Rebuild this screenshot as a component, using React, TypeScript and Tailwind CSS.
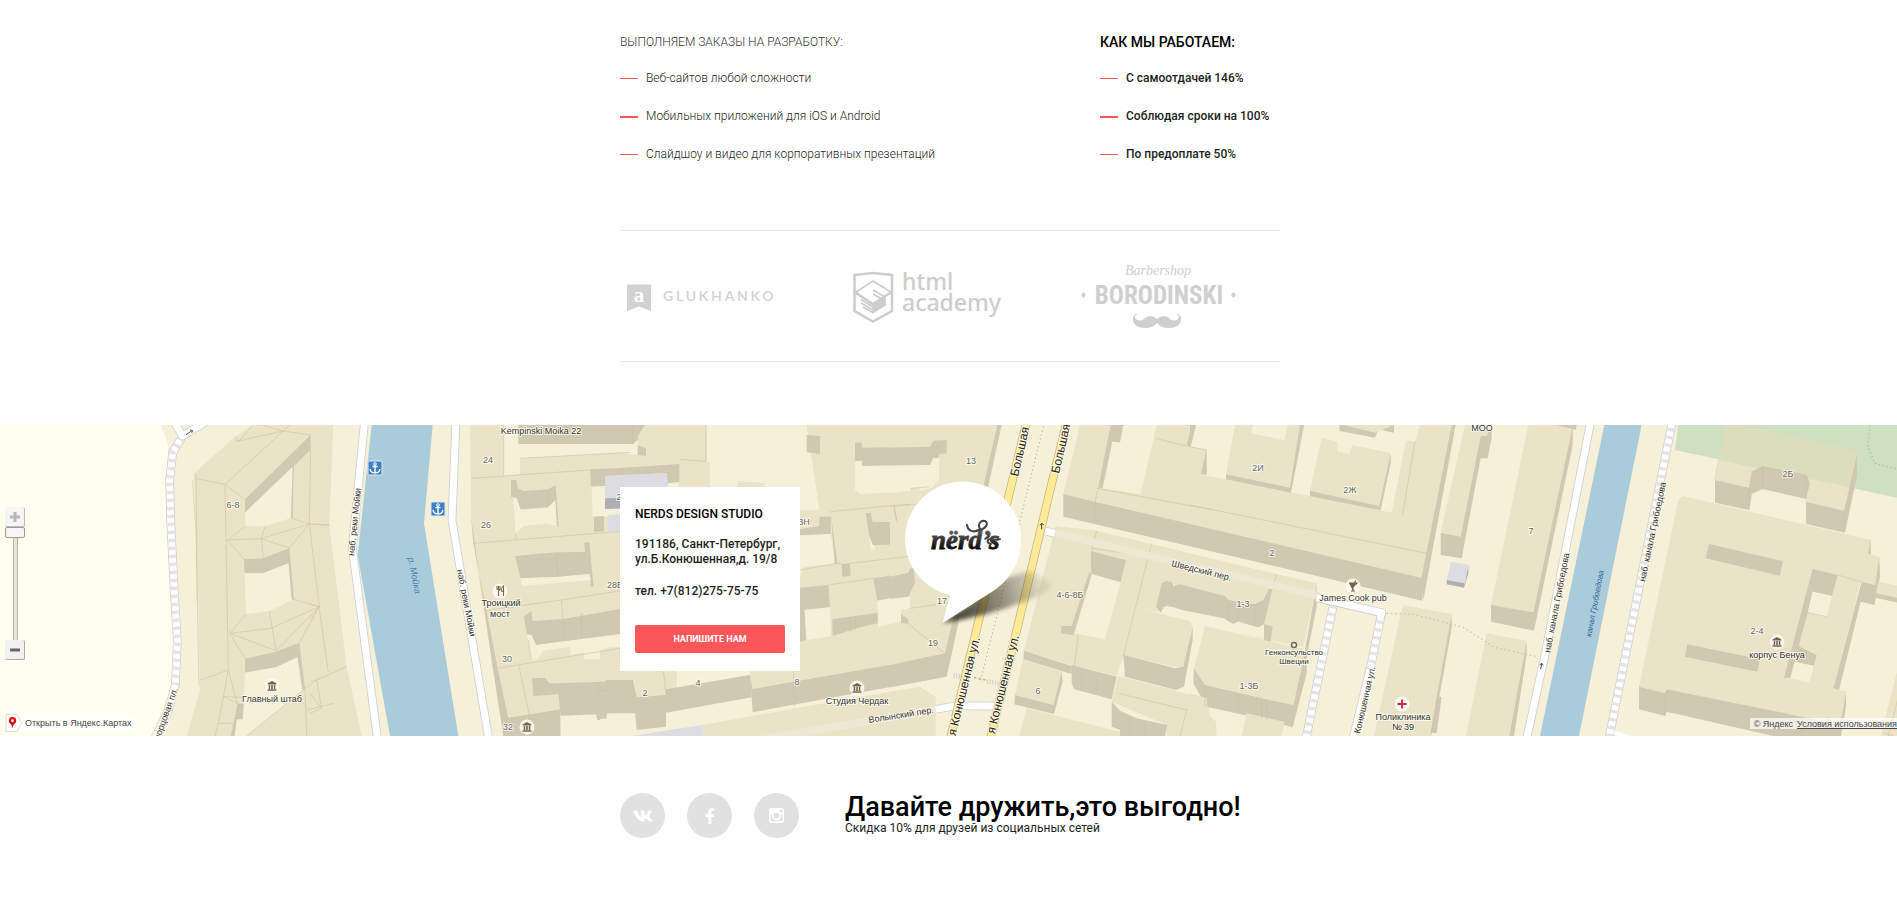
import React from "react";
import { FaFacebookF, FaVk } from "react-icons/fa";

const FILL: Record<string, string> = {
  square: "#fffff0",
  land: "#f7f0d9",
  roof: "#eae3c7",
  wall: "#d0c8b0",
  water: "#aacbda",
  green: "#cfe0c0",
  tint: "#dcddbc",
  lilac: "#dddce2",
  lilacWall: "#b0aeb5",
};

type Shape = [string, string];

/* Each tile holds shapes in units of a third of a pixel. */
const tileA: Shape[] = [
  ["square", "0,15 482,15 505,75 498,180 502,320 512,520 520,680 515,800 455,948 0,948"],
  ["roof", "755,15 1000,15 988,315 1040,740 1085,948 560,948 600,810 595,545 582,160 700,55"],
  ["wall", "932,45 735,238 735,278 932,90"],
  ["land", "735,278 878,140 873,294 795,319 737,318"],
  ["wall", "878,140 882,136 878,294 873,294"],
  ["wall", "732,418 790,415 868,384 882,538 875,541 865,430 790,460 734,460"],
  ["land", "734,460 790,460 865,430 875,540 808,573 738,583"],
  ["wall", "735,716 828,695 898,668 915,805 907,812 892,712 828,742 735,758"],
  ["land", "735,758 828,742 892,712 907,812 740,948 703,948 712,898 728,898"],
  ["wall", "712,853 731,850 728,898 710,898 703,948 693,948"],
];

const tileB: Shape[] = [
  ["water", "185,15 368,15 342,310 445,948 240,948 143,405"],
  ["roof", "480,15 1100,15 1100,948 585,948 548,740 490,370 483,290"],
  ["wall", "483,290 490,370 562,740 595,895 600,948 580,948 548,740"],
  ["land", "582,15 960,15 960,97 630,115 630,162 581,167"],
  ["wall", "625,15 960,15 960,72 625,72"],
  ["wall", "603,180 620,180 623,205 640,213 715,208 737,195 746,318 740,320 736,245 712,262 632,268 620,235 603,230"],
  ["land", "610,234 620,235 632,270 712,264 736,240 740,318 712,311 640,317 617,340"],
  ["wall", "840,148 960,143 960,165 885,168 885,198 843,200"],
  ["land", "845,200 885,198 885,267 960,262 960,290 848,290"],
  ["lilac", "885,168 1070,160 1073,235 885,235"],
  ["lilacWall", "885,235 1073,232 1073,262 885,267"],
  ["wall", "852,290 882,288 882,334 852,336"],
  ["lilac", "895,285 940,282 940,332 895,334"],
  ["wall", "615,408 740,397 825,396 823,368 838,367 851,500 843,500 838,462 750,470 632,475"],
  ["land", "632,475 750,470 838,462 843,480 635,498"],
  ["wall", "641,590 664,573 668,603 760,597 960,562 960,640 678,675 664,645 651,643"],
  ["land", "651,643 664,645 678,675 960,638 960,680 895,683 895,718 822,718 822,697 782,705 780,680 700,692 684,718 664,720"],
  ["wall", "592,895 750,870 752,948 580,948"],
  ["land", "752,887 1000,878 1000,948 752,948"],
  ["wall", "666,775 705,773 718,790 738,790 860,786 960,780 960,878 890,880 888,900 862,900 858,883 752,887 745,822 715,825 670,828"],
];

const tileC: Shape[] = [
  ["roof", "60,15 330,15 330,400 60,400"],
  ["wall", "60,15 135,15 115,45 113,60 100,72 60,72"],
  ["land", "60,72 100,72 113,60 115,105 60,98"],
  ["wall", "113,75 138,85 138,108 113,105"],
  ["wall", "60,144 238,132 238,200 203,200 200,160 60,166"],
  ["lilac", "60,165 200,160 203,210 60,210"],
  ["land", "203,190 238,186 238,205 203,205"],
  ["land", "320,15 620,15 620,95 658,100 658,270 500,270 358,210 355,128 320,125"],
  ["roof", "412,183 495,190 495,230 412,230"],
  ["roof", "620,15 1000,15 1000,760 600,780 600,270 658,270"],
  ["wall", "620,45 660,48 660,102 620,97"],
  ["wall", "765,68 785,68 785,83 990,80 990,135 785,138 785,122 765,124"],
  ["land", "765,124 785,122 785,138 990,135 990,203 930,205 930,214 780,222 765,210"],
  ["wall", "600,328 658,318 658,290 692,290 692,342 600,345"],
  ["land", "600,347 692,342 706,432 612,440 600,470"],
  ["wall", "692,275 712,430 704,432"],
  ["wall", "797,278 812,280 818,307 990,303 990,368 820,376 808,350"],
  ["land", "808,350 818,376 825,378 825,390 812,392"],
  ["wall", "725,432 750,430 752,468 727,470"],
  ["wall", "600,503 685,495 690,562 614,570 618,660 600,665"],
  ["land", "614,570 690,562 693,648 620,660"],
  ["wall", "697,598 833,578 833,610 780,622 698,648"],
  ["wall", "820,475 925,458 930,448 942,445 942,515 928,530 920,525 832,542"],
  ["land", "832,542 920,525 935,530 935,570 905,570 905,605 835,620"],
  ["wall", "903,580 925,600 925,612 903,608"],
  ["land", "0,895 20,895 20,880 110,880 460,850 1010,760 1070,948 0,948"],
  ["roof", "0,690 25,683 60,680 60,750 190,750 198,810 450,765 450,750 600,750 960,650 960,718 458,807 198,825 110,832 98,780 0,780"],
  ["wall", "0,800 20,797 18,780 98,780 110,832 110,880 20,880 20,895 0,897"],
  ["wall", "110,832 198,825 198,920 110,930 98,800"],
  ["wall", "198,808 450,765 455,832 198,878"],
  ["wall", "458,807 1010,710 1038,700 1038,770 458,877 450,765"],
  ["lilac", "95,948 305,915 310,948"],
  ["roof", "305,915 870,815 960,800 1007,830 1007,948 310,948"],
];

const tileD: Shape[] = [
  ["roof", "0,15 322,15 165,700 0,738"],
  ["wall", "322,15 335,15 170,770 163,770 165,700"],
  ["wall", "0,83 120,80 130,62 170,60 170,100 148,102 145,115 130,115 120,135 0,137"],
  ["land", "0,137 120,135 130,115 148,115 148,180 125,203 92,212 88,203 60,203 60,212 0,220"],
  ["wall", "0,470 55,458 60,445 72,445 75,490 55,530 0,535"],
  ["land", "0,540 60,530 60,565 35,570 33,605 0,612"],
  ["wall", "33,582 55,598 55,612 33,608"],
  ["wall", "0,735 165,700 168,770 0,802"],
  ["roof", "570,15 1685,15 1600,475 520,222"],
  ["wall", "520,222 615,245 1600,475 1597,542 520,290"],
  ["wall", "662,15 705,15 690,68 667,65 640,205 625,203"],
  ["land", "700,15 800,15 752,222 638,205 667,65 690,68"],
  ["wall", "905,15 918,15 905,80 890,75"],
  ["wall", "948,90 950,168 934,165"],
  ["roof", "497,318 620,332 1160,462 1280,490 1240,680 1130,660 740,560 700,708 680,768 545,735 402,692"],
  ["wall", "402,692 545,738 545,762 400,718"],
  ["wall", "545,735 680,770 665,838 553,808 545,790"],
  ["wall", "603,393 695,418 708,420 692,487 603,462"],
  ["land", "603,462 692,487 645,658 555,640"],
  ["wall", "605,465 550,645 512,640 515,618 545,618 598,455"],
  ["wall", "798,560 815,490 830,483 846,487 850,500 868,493 1005,528 1015,540 1095,553 1120,540 1137,507 1147,508 1122,612 1105,622 1070,615 1045,603 1030,612 1010,605 1005,595 875,570 850,562 830,555 815,580"],
  ["land", "812,580 822,560 850,562 875,570 1005,597 1030,612 1045,605 1105,622 1122,614 1122,655 945,618 910,745 908,620 898,603"],
  ["roof", "740,560 815,583 900,603 909,620 880,745 700,708"],
  ["wall", "700,705 855,745 880,740 908,620 908,660 882,800 858,810 705,770"],
  ["roof", "398,718 515,755 490,855 375,825"],
  ["wall", "375,825 490,855 515,755 518,785 492,882 373,853"],
  ["roof", "410,865 690,935 690,948 388,948"],
  ["roof", "685,768 955,838 958,885 978,905 980,948 830,948 830,915 665,845"],
  ["wall", "665,845 690,872 740,895 832,915 825,948 690,948 690,930 665,920"],
];

const tileE: Shape[] = [
  ["wall", "0,15 18,15 5,75 0,80"],
  ["land", "18,15 135,15 108,163 108,178 32,165 45,130 50,88 2,80"],
  ["wall", "50,88 50,165 33,163"],
  ["land", "342,15 690,15 675,65 648,62 605,278 360,228 303,217 330,80"],
  ["land", "190,15 292,15 283,60 183,40"],
  ["wall", "108,163 300,203 330,15 342,15 303,218 108,178"],
  ["roof", "395,53 442,65 442,92 478,102 487,75 602,100 567,258 360,212"],
  ["wall", "360,212 567,258 602,100 602,130 572,271 360,229"],
  ["wall", "448,15 612,15 612,38 565,28 555,53 448,33"],
  ["roof", "460,15 612,15 555,38"],
  ["wall", "785,15 797,15 700,540 694,475"],
  ["roof", "825,15 905,15 890,48 872,48 812,350 752,338"],
  ["wall", "752,338 812,350 872,48 890,48 905,15 905,55 893,115 872,115 815,415 752,405"],
  ["lilac", "783,425 835,435 825,490 770,480"],
  ["lilacWall", "770,480 825,490 835,435 835,460 822,503 770,493"],
  ["roof", "1015,15 1150,15 1148,50 1030,577 903,555"],
  ["wall", "903,555 1030,577 1148,20 1148,75 1032,632 903,605"],
  ["wall", "1100,15 1160,15 1158,30"],
  ["roof", "638,555 785,582 722,948 552,948"],
  ["wall", "785,582 785,625 748,830 755,830 740,940 722,938 740,830"],
  ["roof", "890,640 1010,663 960,948 828,948"],
  ["wall", "1010,663 1010,705 972,948 958,948"],
  ["roof", "45,618 350,690 310,855 45,795 12,745"],
  ["wall", "12,745 45,795 230,838 310,855 345,700 350,700 350,760 308,922 230,900 50,860 10,790"],
  ["wall", "222,612 248,620 242,665 222,660"],
  ["wall", "380,490 380,560 350,710 343,702"],
  ["roof", "0,820 50,835 55,885 75,905 80,948 0,948"],
  ["roof", "170,880 283,905 275,948 155,948"],
];

const tileF: Shape[] = [
  ["water", "193,15 305,15 117,948 0,948"],
  ["green", "415,15 1071,15 1071,233 405,90"],
  ["roof", "560,15 600,15 953,95 945,205 912,272 798,245 630,270 627,203 525,180"],
  ["tint", "560,15 600,15 953,95 945,205 535,120"],
  ["land", "635,222 668,207 798,235 798,312 630,270"],
  ["wall", "525,180 627,203 635,155 668,138 800,165 810,190 798,237 668,207 635,222 627,270 525,248"],
  ["wall", "798,245 912,272 953,95 950,170 915,338 798,312"],
  ["roof", "428,228 992,360 992,402 1018,410 1005,495 962,485 880,805 918,815 900,915 378,808 375,820 297,800 415,240"],
  ["wall", "297,800 375,820 380,808 785,890 900,915 918,815 918,860 903,948 700,948 380,875 375,888 297,868"],
  ["wall", "992,360 992,402 984,400"],
  ["wall", "507,372 728,423 720,467 497,415"],
  ["wall", "442,673 660,718 652,755 435,710"],
  ["wall", "818,447 893,465 876,528 818,515 803,578 750,775 732,773"],
  ["wall", "768,675 830,705 822,738 765,725"],
  ["land", "818,515 876,528 860,590 803,578"],
  ["land", "765,725 822,738 808,788 752,775"],
  ["wall", "965,485 1005,495 1018,410 1020,470 1003,555 962,545 897,810 880,805"],
  ["roof", "1015,485 1080,498 1080,535 1008,520"],
  ["wall", "1008,520 1080,535 1080,550 1008,533"],
  ["roof", "1071,755 1085,755 1085,948 1022,948"],
];

const SEAMS: [number, string][] = [
  [0, "M585,175L675,193L850,33L932,45M675,193L735,238M675,193L685,750L712,853M850,33L790,15M850,33L870,15M850,33L705,65M737,318L683,360L732,418M683,360L784,356L790,415M784,356L795,319M784,356L928,312L873,294M784,356L868,384L928,312L932,90M928,312L958,560L882,538M958,560L828,692L808,573M958,560L812,625L690,640L738,583M690,640L735,716M690,640L828,692M958,560L898,668M600,780L685,750M685,750L670,830L731,832M670,830L655,910L700,910M655,910L645,948M728,858L670,830M915,805L958,775M915,805L920,948M920,870L1000,850M928,312L988,315M740,948L907,812M705,50L715,65L755,20M578,180L588,340L597,800M592,545L588,160"],
  [310, "M0,553L27,560L55,757M0,600L27,560M0,785L20,780L110,740M20,780L35,865L0,880M0,820L35,865M0,312L58,315M483,175L840,150M581,15L581,165M490,370L960,332M525,572L755,540L960,508M755,540L762,660M617,340L617,358M562,745L960,680M625,730L658,885M664,720L655,660M592,895L750,870M740,397L743,470M815,580L815,655M712,208L712,262M862,786L862,812L890,812L890,785M630,115L960,97"],
  [600, "M238,118L320,125M692,275L890,255L960,252M882,255L890,300M712,430L725,432M750,430L960,405M600,450L712,430M685,495L820,475M750,590L752,635M765,590L767,630M580,750L583,860M190,750L198,825M318,15L318,125M98,780L98,800M97,15L97,72M932,205L990,200"],
  [890, "M0,260L60,255M12,260L20,305M60,565L180,548M55,612L165,700M625,203L615,245L615,310M795,55L890,78L950,90M620,332L605,390M785,370L700,708M605,385L710,400M620,205L960,268M553,740L565,645M620,765L618,820M575,755L575,812M685,820L890,870L870,948M720,895L720,948M765,905L765,948"],
  [1190, "M0,255L710,400M675,65L638,283M260,462L247,508M230,838L230,900M115,540L115,605M195,553L195,620M145,545L145,600M145,825L145,880M45,795L45,860M215,838L215,895M722,948L735,880"],
  [1540, "M627,203L627,270M912,272L912,335M668,138L668,207M798,168L798,235M893,465L962,485M785,890L785,948M375,820L375,888M535,120L525,180M803,578L860,590M1045,948L1085,790M1032,940L1085,955M865,890L862,915"],
];

function Tile({ x, shapes }: { x: number; shapes: Shape[] }) {
  return (
    <g transform={`translate(${x} -5) scale(0.33333)`}>
      {shapes.map(([kind, points], i) => (
        <polygon key={i} points={points} fill={FILL[kind]} />
      ))}
    </g>
  );
}

function Road({ d, width = 21, color = "#fff", edge = "#cfcfcf", striped = false }: { d: string; width?: number; color?: string; edge?: string; striped?: boolean }) {
  return (
    <g fill="none" strokeLinejoin="round">
      <path d={d} stroke={edge} strokeWidth={width + 5} />
      <path d={d} stroke={color} strokeWidth={width} />
      {striped && <path d={d} stroke="#e4e4e4" strokeWidth={width} strokeDasharray="10 14" />}
    </g>
  );
}

function Label({ x, y, r = 0, size = 9, color = "#666", anchor = "middle", italic = false, children }: { x: number; y: number; r?: number; size?: number; color?: string; anchor?: "start" | "middle" | "end"; italic?: boolean; children: string }) {
  return (
    <text
      x={x}
      y={y}
      fontSize={size}
      fill={color}
      textAnchor={anchor}
      fontStyle={italic ? "italic" : "normal"}
      transform={r ? `rotate(${r} ${x} ${y})` : undefined}
      stroke={italic ? "none" : "#fffdf2"}
      strokeOpacity="0.8"
      strokeWidth="2"
      paintOrder="stroke"
    >
      {children}
    </text>
  );
}

function Museum({ x, y }: { x: number; y: number }) {
  return (
    <g transform={`translate(${x} ${y})`}>
      <circle r="7.5" fill="#fffdf5" fillOpacity="0.85" />
      <path d="M-4.5-2.5 0-5l4.5 2.5v1h-9zM-3.3-1h1.5v4h-1.5zM-.8-1H.8v4H-.8zM1.8-1h1.5v4H1.8zM-4.5 3.3h9v1.4h-9z" fill="#7b6350" />
    </g>
  );
}

function Anchor({ x, y }: { x: number; y: number }) {
  return (
    <g transform={`translate(${x} ${y})`}>
      <rect x="-7" y="-7" width="14" height="14" rx="1" fill="#3f7fc4" stroke="#dfeaf5" />
      <path d="M0-3v8M-2.5-1.5h5M-5 1C-4.5 4-2.500 5 0 5s4.500-1 5-4" fill="none" stroke="#fff" strokeWidth="1.4" />
      <circle cy="-4" r="1.300" fill="none" stroke="#fff" />
    </g>
  );
}

function MapDrawing() {
  return (
    <svg viewBox="0 0 1897 311" preserveAspectRatio="xMidYMid slice" className="block h-[311px] w-full" style={{ fontFamily: '"Liberation Sans", Arial, sans-serif' }} role="img" aria-label="Карта">
      <defs>
        <linearGradient id="shade" gradientUnits="userSpaceOnUse" x1="945" y1="195" x2="1055" y2="160">
          <stop offset="0" stopColor="#2a2618" stopOpacity="0.95" />
          <stop offset="0.35" stopColor="#2a2618" stopOpacity="0.65" />
          <stop offset="1" stopColor="#2a2618" stopOpacity="0" />
        </linearGradient>
        <linearGradient id="ink" x1="0" y1="0" x2="0" y2="1">
          <stop offset="0" stopColor="#777" />
          <stop offset="0.8" stopColor="#0a0a0a" />
        </linearGradient>
        <filter id="soft" x="-20%" y="-20%" width="140%" height="140%">
          <feGaussianBlur stdDeviation="2" />
        </filter>
      </defs>
      <rect width="1897" height="311" fill={FILL.land} />
      <Tile x={0} shapes={tileA} />
      <Tile x={310} shapes={tileB} />
      <Tile x={600} shapes={tileC} />
      <Tile x={890} shapes={tileD} />
      <Tile x={1190} shapes={tileE} />
      <Tile x={1540} shapes={tileF} />
      {SEAMS.map(([x, d]) => (
        <g key={x} transform={`translate(${x} -5) scale(0.33333)`}>
          <path d={d} fill="none" stroke="#cdbf9a" strokeOpacity="0.55" strokeWidth="3" />
        </g>
      ))}

      <g transform="translate(0 -5) scale(0.33333)">
        <Road d="M545,52L518,98L509,180L512,300L522,500L532,660L526,800" striped />
        <Road d="M526,795L502,880L462,960" />
        <Road d="M520,0L547,48L640,-8" />
        <path d="M558,44L576,32M570,30l8,2l-3,7" stroke="#555" strokeWidth="3" fill="none" />
      </g>
      <g transform="translate(310 -5) scale(0.33333)">
        <Road d="M164,0L127,385L203,960" />
        <Road d="M438,0L426,300L537,960" />
      </g>
      <g transform="translate(600 -5) scale(0.33333)">
        <path d="M480,960L1008,868" stroke="#efe6d4" strokeWidth="24" fill="none" />
      </g>
      <g transform="translate(890 -5) scale(0.33333)">
        <path d="M490,337L850,425L1285,527" stroke="#efe6d4" strokeWidth="22" fill="none" />
        <Road d="M137,868L200,857L315,858" />
        <Road d="M460,331L494,340" />
        <Road d="M412,0L370,170L180,960" color="#ffe995" edge="#c4b98b" />
        <Road d="M532,0L490,170L378,640L300,960" color="#ffe995" edge="#c4b98b" />
        <path d="M460,20L388,310L345,490L272,780" stroke="#a5c98f" strokeWidth="3.500" strokeDasharray="4 8" fill="none" />
        <path d="M455,328v-18l-5,6m5,-6l6,4" stroke="#444" strokeWidth="3" fill="none" />
        <path d="M192,760v14M200,761v14M208,763v14M216,765v14M292,778v14M300,779v14M308,780v14M316,782v14M324,784v14" stroke="#bbb" strokeWidth="2" />
        <path d="M252,772L288,780" stroke="#a5c98f" strokeWidth="5" strokeDasharray="7 7" />
      </g>
      <g transform="translate(1190 -5) scale(0.33333)">
        <Road d="M430,555L347,960" striped />
        <Road d="M575,578L540,750" striped />
        <Road d="M540,748L488,960" />
        <Road d="M380,533L575,578L570,595" />
        <Road d="M1203,0L1066,700L1009,960" />
        <path d="M590,580L670,583L820,622L915,683L1042,710" stroke="#b9c79a" strokeWidth="3.500" strokeDasharray="4 9" fill="none" />
        <path d="M1052,748l3,-18l-6,5m6,-5l5,6" stroke="#444" strokeWidth="3" fill="none" />
      </g>
      <g transform="translate(1540 -5) scale(0.33333)">
        <Road d="M398,0L206,960" striped />
        <path d="M990,15L983,80L1005,130L1071,148" stroke="#a5c98f" strokeWidth="4" strokeDasharray="4 8" fill="none" />
        <path d="M222,937L270,952" stroke="#fff" strokeWidth="12" />
      </g>

      <Museum x={272} y={261} />
      <Museum x={527} y={302} />
      <Museum x={857} y={263} />
      <Museum x={1777} y={217} />
      <Anchor x={375} y={43} />
      <Anchor x={438} y={84} />
      <g transform="translate(500 166)">
        <circle r="7.500" fill="#fffdf5" fillOpacity="0.850" />
        <path d="M-3-5v3.500M-1.500-5v3.500M0-5v3.500M-3-1.500H0L-1.500 0v5M3.500 5V-5C1.500-4 1.500-1 2 0.500h1.500" fill="none" stroke="#7b6350" strokeWidth="1.100" />
      </g>
      <g transform="translate(1353 161)">
        <circle r="7.500" fill="#fffdf5" fillOpacity="0.850" />
        <path d="M-4-3H4L0 1v4M-2 5h4M1-3l2-2.500" fill="#7b6350" stroke="#7b6350" strokeWidth="1.200" />
      </g>
      <g transform="translate(1402 279)">
        <circle r="7.500" fill="#fffdf5" fillOpacity="0.900" />
        <path d="M0-4.500v9M-4.500 0h9" stroke="#c62640" strokeWidth="1.800" />
      </g>
      <circle cx="1294" cy="220" r="2.500" fill="#fff" stroke="#7b6350" strokeWidth="1.500" />

      <Label x={233} y={83}>6-8</Label>
      <Label x={272} y={277} color="#333">Главный штаб</Label>
      <Label x={178} y={264} r={-70} anchor="end" color="#333">ворцовая пл.</Label>
      <Label x={541} y={9} color="#333">Kempinski Moika 22</Label>
      <Label x={488} y={38}>24</Label>
      <Label x={486} y={103}>26</Label>
      <Label x={615} y={163}>28Б</Label>
      <Label x={507} y={237}>30</Label>
      <Label x={508} y={305}>32</Label>
      <Label x={619} y={75}>2</Label>
      <Label x={501} y={181} color="#333">Троицкий</Label>
      <Label x={500} y={192} color="#333">мост</Label>
      <Label x={354} y={131} r={-84} anchor="start" color="#333">наб. реки Мойки</Label>
      <Label x={457} y={145} r={79} anchor="start" color="#333">наб. реки Мойки</Label>
      <Label x={408} y={133} r={79} anchor="start" color="#4b7fae" italic>р. Мойка</Label>
      <Label x={645} y={271}>2</Label>
      <Label x={698} y={261}>4</Label>
      <Label x={797} y={260}>8</Label>
      <Label x={804} y={100}>3Н</Label>
      <Label x={857} y={279} color="#333">Студия Чердак</Label>
      <Label x={869} y={298} r={-9} anchor="start" color="#333">Волынский пер.</Label>
      <Label x={971} y={39}>13</Label>
      <Label x={942} y={179}>17</Label>
      <Label x={933} y={221}>19</Label>
      <Label x={1038} y={269}>6</Label>
      <Label x={1070} y={173}>4-6-8Б</Label>
      <Label x={1018} y={52} r={-77} size={12} anchor="start" color="#222">Большая</Label>
      <Label x={1059} y={49} r={-77} size={12} anchor="start" color="#222">Большая</Label>
      <Label x={980} y={213} r={-76} size={12} anchor="end" color="#222">я Конюшенная ул.</Label>
      <Label x={1019} y={211} r={-76} size={12} anchor="end" color="#222">я Конюшенная ул.</Label>
      <Label x={1171} y={141} r={14} anchor="start" color="#333">Шведский пер.</Label>
      <Label x={1258} y={46}>2И</Label>
      <Label x={1350} y={68}>2Ж</Label>
      <Label x={1272} y={131}>2</Label>
      <Label x={1243} y={182}>1-3</Label>
      <Label x={1249} y={264}>1-3Б</Label>
      <Label x={1353} y={176} color="#333">James Cook pub</Label>
      <Label x={1294} y={230} size={8} color="#333">Генконсульство</Label>
      <Label x={1294} y={239} size={8} color="#333">Швеции</Label>
      <Label x={1403} y={295} color="#333">Поликлиника</Label>
      <Label x={1403} y={305} color="#333">№ 39</Label>
      <Label x={1360} y={309} r={-77} anchor="start" color="#333">Конюшенная ул.</Label>
      <Label x={1482} y={6} color="#333">МОО</Label>
      <Label x={1531} y={109}>7</Label>
      <Label x={1550} y={228} r={-79} anchor="start" color="#333">наб. канала Грибоедова</Label>
      <Label x={1645} y={157} r={-78} anchor="start" color="#333">наб. канала Грибоедова</Label>
      <Label x={1591} y={212} r={-79} size={8} anchor="start" color="#2f659c" italic>канал Грибоедова</Label>
      <Label x={1788} y={52}>2Б</Label>
      <Label x={1757} y={209}>2-4</Label>
      <Label x={1777} y={233} color="#333">корпус Бенуа</Label>

      <path d="M943 198 1006 153 1030 146Q1045 156 1058 160 1010 188 943 198Z" fill="url(#shade)" filter="url(#soft)" />
      <path d="M950 170 942.500 198 990 168C1010 156 1021 137 1021 114A58 57.500 0 1 0 950 170Z" fill="#fff" />
      <text x="931" y="124" fontSize="27" fontWeight="700" fontStyle="italic" fill="url(#ink)" stroke="url(#ink)" strokeWidth="0.8" style={{ fontFamily: '"Liberation Serif", serif' }}>
        nërd’s
      </text>
      <path d="M967 100c1 7 8 8 13 4-3-5 1-9 5-8 4 2 1 8-6 9M991 119c-5-1-4-5 0-5 4 0 6 2 9 0" fill="none" stroke="#444" strokeWidth="2" strokeLinecap="round" />
    </svg>
  );
}

function WorkList({ items }: { items: string[] }) {
  return (
    <ul className="mt-4 flex flex-col gap-[18px]">
      {items.map((item, i) => (
        <li key={item} className="flex items-start gap-2 whitespace-nowrap">
          <span className={i === 1 ? "mt-2.5 h-[2px] w-[18px] bg-[#fb565a]" : "mt-2.5 h-px w-[18px] bg-[#fb565a]"} />
          <span>{item}</span>
        </li>
      ))}
    </ul>
  );
}

function Partners() {
  return (
    <section className="mt-[66px] flex h-[132px] items-center gap-[45px] border-y border-[#ebebeb]" aria-label="Партнёры">
      <a href="#glukhanko" aria-label="Glukhanko">
        <svg width="180" height="70" viewBox="620 261 180 70" fill="#d2d2d2">
          <path d="M627 284.500h24v26.500l-12-4.500-12 4.500z" />
          <text x="639" y="302" textAnchor="middle" fontSize="21" fontWeight="700" fill="#fff" style={{ fontFamily: '"Liberation Serif", serif' }}>a</text>
          <text x="663" y="301" fontSize="14" className="font-semibold tracking-[0.2em]" style={{ fontFamily: "Lato, sans-serif" }}>GLUKHANKO</text>
        </svg>
      </a>
      <a href="#academy" aria-label="HTML Academy">
        <svg width="180" height="70" viewBox="845 261 180 70" fill="#cdcdcd">
          <path d="M854.500 275 873 273l19 2v36l-19 10.500L854.500 311z" fill="none" stroke="#cdcdcd" strokeWidth="2.500" />
          <path d="M856 292 873 281l18 11-18 11.500zM855 293l18 12M891 293l-18 12" fill="none" stroke="#cdcdcd" strokeWidth="1.500" />
          <path d="M873 305l12-9v9l-12 7.500zM873 290l12 7M873 294l9 5M861 299.500l12 7.500M861 303l12 7M863 307l10 5.500" stroke="#cdcdcd" strokeWidth="1.600" />
          <g fontSize="23" fontWeight="500" style={{ fontFamily: '"Noto Sans", sans-serif' }}>
            <text x="902" y="290">html</text>
            <text x="902" y="311">academy</text>
          </g>
        </svg>
      </a>
      <a href="#borodinski" aria-label="Barbershop Borodinski">
        <svg width="180" height="80" viewBox="1070 256 180 80" fill="#cfcfcf">
          <text x="1158" y="275" textAnchor="middle" fontSize="14" fontStyle="italic" style={{ fontFamily: '"Liberation Serif", serif' }}>Barbershop</text>
          <text x="1159" y="304" textAnchor="middle" fontSize="25" fontWeight="700" style={{ fontFamily: '"Roboto Condensed", "Liberation Sans Narrow", "Liberation Sans", sans-serif' }}>BORODINSKI</text>
          <path d="M1083.500 292l2.500 3-2.500 3-2.500-3zM1233.500 292l2.500 3-2.500 3-2.500-3z" />
          <path d="M1157 319c3-3 8-4 12-1 4 4 9 3 10-1 0-2-2-3-4-2 2-2 6-1 6 4 0 6-5 9-12 9-5 0-10-2-12-5-2 3-7 5-12 5-7 0-12-3-12-9 0-5 4-6 6-4-2-1-4 0-4 2 1 4 6 5 10 1 4-3 9-2 12 1z" />
        </svg>
      </a>
    </section>
  );
}

const socialClass = "flex size-[45px] items-center justify-center rounded-full bg-[#e1e1e1] text-white";
const shell = "mx-auto w-full max-w-[663px] pl-[3px]";

export default function App() {
  return (
    <main className="min-h-screen bg-white text-xs leading-5 text-[#1c1f22]" style={{ fontFamily: "Roboto, sans-serif" }}>
      <div className={`${shell} pt-8`}>
        <div className="grid grid-cols-[480px_1fr]">
          <section className="font-light">
            <h2 className="text-xs leading-5 text-[#333]">ВЫПОЛНЯЕМ ЗАКАЗЫ НА РАЗРАБОТКУ:</h2>
            <WorkList items={["Веб-сайтов любой сложности", "Мобильных приложений для iOS и Android", "Слайдшоу и видео для корпоративных презентаций"]} />
          </section>
          <section className="font-medium">
            <h2 className="text-sm leading-5 text-black">КАК МЫ РАБОТАЕМ:</h2>
            <WorkList items={["С самоотдачей 146%", "Соблюдая сроки на 100%", "По предоплате 50%"]} />
          </section>
        </div>
        <Partners />
      </div>

      <section className="relative mt-[63px] overflow-hidden">
        <MapDrawing />
        <div className="absolute top-[82px] left-[5px] flex flex-col items-center">
          <button aria-label="Приблизить" className="flex size-5 items-center justify-center rounded-xs border-r border-b border-[#bbb] bg-[#f5f5f3]">
            <svg width="10" height="10" viewBox="0 0 10 10"><path d="M5 0v10M0 5h10" stroke="#b9b9b4" strokeWidth="3" /></svg>
          </button>
          <input
            type="range"
            min="0"
            max="16"
            defaultValue="0"
            aria-label="Масштаб"
            className="h-[113px] w-5 appearance-none bg-[linear-gradient(90deg,transparent_8px,#b5b5a8_8px,#b5b5a8_9px,#e6e6d8_9px,#e6e6d8_12px,#b5b5a8_12px,#b5b5a8_13px,transparent_13px)] [writing-mode:vertical-lr] [&::-webkit-slider-thumb]:h-[11px] [&::-webkit-slider-thumb]:w-5 [&::-webkit-slider-thumb]:appearance-none [&::-webkit-slider-thumb]:rounded-xs [&::-webkit-slider-thumb]:border [&::-webkit-slider-thumb]:border-[#999] [&::-webkit-slider-thumb]:bg-[#f6f6f6]"
          />
          <button aria-label="Отдалить" className="flex size-5 items-center justify-center rounded-xs border-r border-b border-[#aaa] bg-[#f1f1f0]">
            <svg width="10" height="10" viewBox="0 0 10 10"><path d="M0 5h10" stroke="#666" strokeWidth="3" /></svg>
          </button>
        </div>
        <a href="#maps" className="absolute bottom-1 left-[5px] flex h-[18px] items-center gap-[3px] bg-white/80 pr-1 text-[9px] text-[#444]" style={{ fontFamily: '"Liberation Sans", Arial, sans-serif' }}>
          <svg width="17" height="18" viewBox="0 0 17 18">
            <path d="M1 .5h11l4.500 8.500-4.500 8.500H1z" fill="#fff" stroke="#ddd" />
            <path d="M7.500 3A3.700 3.700 0 0 0 3.800 6.700C3.800 9.500 7 9.500 7.500 14.500 8 9.500 11.200 9.500 11.200 6.700A3.700 3.700 0 0 0 7.500 3Z" fill="#e00a0a" />
            <circle cx="7.500" cy="6.700" r="1.400" fill="#fff" />
          </svg>
          Открыть в Яндекс.Картах
        </a>
        <div className="absolute right-0 bottom-[7px] flex h-[11px] items-center gap-1 bg-white/70 pl-1 text-[9px] text-[#444]" style={{ fontFamily: '"Liberation Sans", Arial, sans-serif' }}>
          <span>© Яндекс</span>
          <a href="#terms" className="underline">Условия использования</a>
        </div>
        <div className="pointer-events-none absolute inset-x-0 top-[62px]">
          <div className={shell}>
            <address className="pointer-events-auto flex min-h-[184px] w-[180px] flex-col bg-white px-[15px] pt-5 pb-[18px] leading-[15px] font-medium not-italic">
              <p className="text-black">NERDS DESIGN STUDIO</p>
              <p className="mt-[15px] whitespace-nowrap">
                191186, Санкт-Петербург,
                <br />
                ул.Б.Конюшенная,д. 19/8
              </p>
              <p className="mt-[17px]">тел. +7(812)275-75-75</p>
              <button className="mt-[26px] h-7 rounded-xs bg-[#fb565a] text-[9px] font-bold text-white">НАПИШИТЕ НАМ</button>
            </address>
          </div>
        </div>
      </section>

      <footer className={`${shell} flex items-start pt-[57px] pb-[72px]`}>
        <nav className="flex gap-[22px]" aria-label="Социальные сети">
          <a href="#vk" aria-label="ВКонтакте" className={socialClass}><FaVk size={20} /></a>
          <a href="#facebook" aria-label="Facebook" className={socialClass}><FaFacebookF size={16} /></a>
          <a href="#instagram" aria-label="Instagram" className={socialClass}>
            <svg width="15" height="15" viewBox="0 0 15 15">
              <path fillRule="evenodd" fill="currentColor" d="M1.800 0h11.400A1.800 1.800 0 0 1 15 1.800v11.400a1.800 1.800 0 0 1-1.800 1.800H1.800A1.800 1.800 0 0 1 0 13.200V1.800A1.800 1.800 0 0 1 1.800 0ZM10.800 1.700v2.500h2.500V1.700ZM1.700 6.300v6.300c0 .4.300.7.700.7h10.200c.4 0 .7-.3.700-.7V6.300h-1.400a4.600 4.600 0 1 1-8.800 0ZM7.500 4.600a2.900 2.900 0 1 0 0 5.800 2.900 2.900 0 0 0 0-5.800Z" />
            </svg>
          </a>
        </nav>
        <div className="ml-[46px]">
          <h2 className="text-[27px] leading-7 font-medium text-black">Давайте дружить,это выгодно!</h2>
          <p className="leading-[15px] font-normal">Скидка 10% для друзей из социальных сетей</p>
        </div>
      </footer>
    </main>
  );
}
